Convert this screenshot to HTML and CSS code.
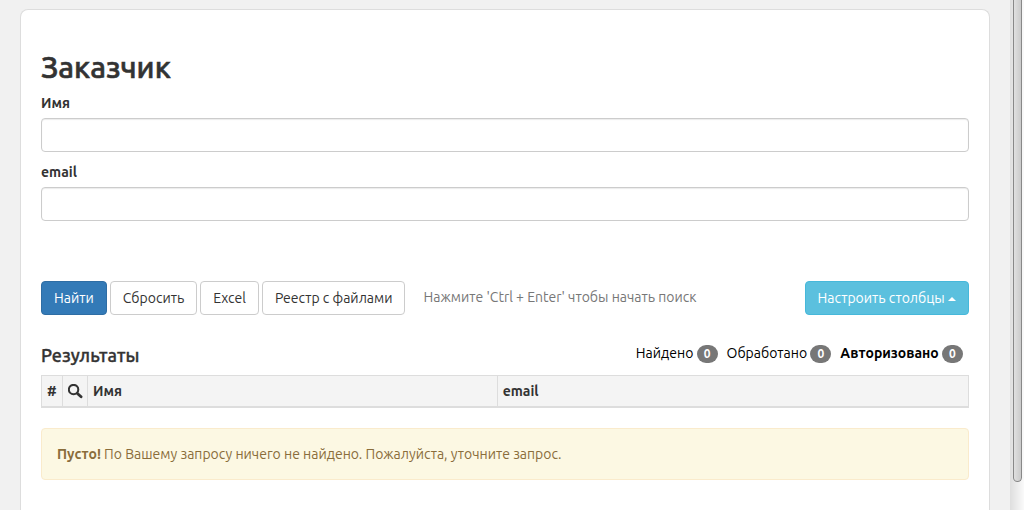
FILE: index.html
```html
<!DOCTYPE html>
<html lang="ru">
<head>
<meta charset="utf-8">
<title>Заказчик</title>
<link rel="stylesheet" href="styles.css">
</head>
<body>
<div class="page">
  <main class="panel">
    <form class="search">
      <h1 class="title">Заказчик</h1>
      <div class="field">
        <label class="label" for="name">Имя</label>
        <input class="input" id="name" type="text">
      </div>
      <div class="field">
        <label class="label" for="email">email</label>
        <input class="input" id="email" type="text">
      </div>
      <div class="actions">
        <button class="btn btn-primary" type="submit">Найти</button>
        <button class="btn" type="reset">Сбросить</button>
        <button class="btn" type="button">Excel</button>
        <button class="btn" type="button">Реестр с файлами</button>
        <span class="hint">Нажмите 'Ctrl + Enter' чтобы начать поиск</span>
        <button class="btn btn-info" type="button">Настроить столбцы <span class="caret"></span></button>
      </div>
    </form>
    <section class="results">
      <div class="results-head">
        <h2 class="subtitle">Результаты</h2>
        <div class="counters">
          <span class="counter">Найдено <span class="badge">0</span></span>
          <span class="counter">Обработано <span class="badge">0</span></span>
          <span class="counter counter-strong">Авторизовано <span class="badge">0</span></span>
        </div>
      </div>
      <table class="table">
        <thead>
          <tr>
            <th class="col-num">#</th>
            <th class="col-icon"><svg class="icon" viewBox="0 0 14 14" role="img" aria-label="Поиск"><circle cx="5.2" cy="5.2" r="4.4" fill="none" stroke="currentColor" stroke-width="1.9"/><path d="M8.8 8.8L12.2 12" stroke="currentColor" stroke-width="2.6" stroke-linecap="round"/></svg></th>
            <th class="col-name">Имя</th>
            <th>email</th>
          </tr>
        </thead>
      </table>
      <div class="alert" role="status"><strong>Пусто!</strong> По Вашему запросу ничего не найдено. Пожалуйста, уточните запрос.</div>
    </section>
  </main>
  <div class="scroll-track" aria-hidden="true"><div class="scroll-thumb"></div></div>
</div>
</body>
</html>
```
FILE: styles.css
```css
* { box-sizing: border-box; }

body {
  margin: 0;
  background: #f1f1f1;
  color: #333;
  font: 14px/20px Ubuntu, "Noto Sans", sans-serif;
}

.page {
  display: flex;
  height: 100vh;
  overflow: hidden;
}

.panel {
  flex: 1;
  min-width: 0;
  margin: 9px 20px 0;
  padding: 40px 20px 20px;
  background: #fff;
  border: 1px solid #ddd;
  border-bottom: 0;
  border-radius: 8px 8px 0 0;
}

.title,
.subtitle {
  font-weight: 500;
  -webkit-text-stroke: 0.02em currentColor;
}

.title {
  margin: 0 0 8px;
  font-size: 30px;
  line-height: 35px;
}

.field { margin-bottom: 10px; }

.label {
  display: block;
  margin-bottom: 5px;
  font-weight: 700;
}

.input {
  display: block;
  width: 100%;
  height: 34px;
  padding: 6px 12px;
  border: 1px solid #ccc;
  border-radius: 4px;
  background: #fff;
  box-shadow: inset 0 1px 1px rgba(0, 0, 0, .08);
  color: #555;
  font: inherit;
}

.actions {
  display: flex;
  align-items: center;
  gap: 3px;
  margin-top: 60px;
}

.btn {
  padding: 6px 12px;
  border: 1px solid #ccc;
  border-radius: 4px;
  background: #fff;
  color: #333;
  font: inherit;
  white-space: nowrap;
}

.btn-primary {
  background: #337ab7;
  border-color: #2e6da4;
  color: #fff;
}

.btn-info {
  margin-left: auto;
  background: #5bc0de;
  border-color: #46b8da;
  color: #fff;
}

.caret {
  display: inline-block;
  vertical-align: middle;
  border: 4px solid transparent;
  border-top: 0;
  border-bottom-color: #fff;
}

.hint {
  margin-left: 15px;
  padding-bottom: 2px;
  color: #777;
}

.results-head {
  display: flex;
  align-items: center;
  justify-content: space-between;
  margin: 30px 0 10px;
}

.subtitle {
  margin: 0;
  font-size: 18px;
  line-height: 20px;
}

.counters {
  display: flex;
  gap: 9px;
  padding-right: 6px;
  margin: -2px 0 2px;
  color: #000;
}

.counter-strong { font-weight: 700; }

.badge {
  display: inline-block;
  min-width: 21px;
  padding: 3px 7px;
  border-radius: 10px;
  background: #777;
  color: #fff;
  font-size: 12px;
  line-height: 12px;
  font-weight: 700;
  text-align: center;
  vertical-align: middle;
}

.table {
  width: 100%;
  table-layout: fixed;
  border-collapse: collapse;
  margin-bottom: 20px;
}

.table th {
  padding: 5px;
  border: 1px solid #ddd;
  border-bottom-width: 2px;
  background: #f4f4f4;
  line-height: 20px;
  text-align: left;
}

.col-num { width: 21px; }
.col-icon { width: 25px; }
.col-name { width: 44.2%; }

.icon {
  display: block;
  width: 15px;
  height: 15px;
}

.alert {
  padding: 15px;
  border: 1px solid #faebcc;
  border-radius: 4px;
  background: #fcf8e3;
  color: #8a6d3b;
}

.scroll-track {
  flex: none;
  width: 14px;
  padding: 0 2px 0 3px;
  background: linear-gradient(to right, #dedede, #fafafa);
}

.scroll-thumb {
  height: 94.5%;
  border: 1px solid #888;
  border-top: 0;
  border-radius: 0 0 5px 5px;
  background: linear-gradient(to right, #e0e0e0, #cacaca);
}
```
